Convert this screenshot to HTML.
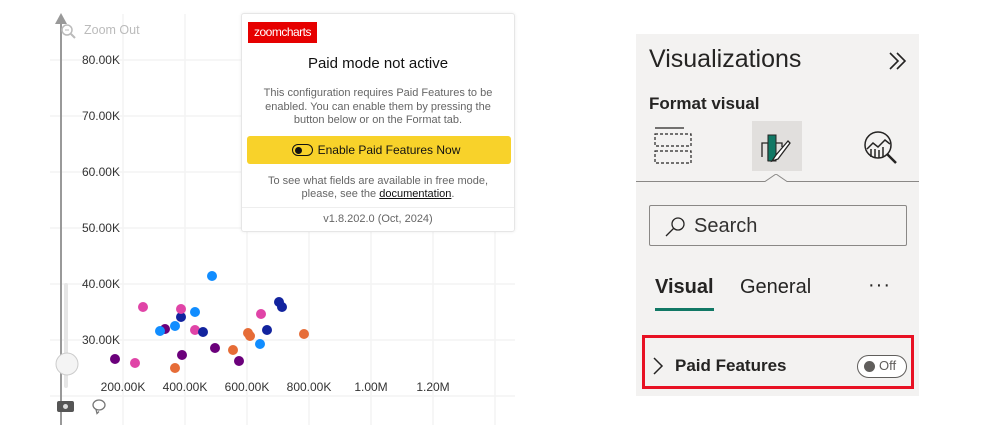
<!DOCTYPE html>
<html><head><meta charset="utf-8"><style>
*{margin:0;padding:0;box-sizing:border-box}
body{width:992px;height:435px;background:#fff;position:relative;overflow:hidden;font-family:"Segoe UI","Liberation Sans",sans-serif}
.a{position:absolute}
.yl{position:absolute;right:872px;font-size:12px;color:#333;text-align:right}
.xl{position:absolute;top:380px;width:70px;margin-left:-35px;text-align:center;font-size:12px;color:#333}
.pop{left:241px;top:13px;width:274px;height:219px;background:#fff;border:1px solid #e6e6e6;border-radius:3px;box-shadow:0 0 3px rgba(0,0,0,.08)}
.panel{left:636px;top:34px;width:283px;height:362px;background:#f3f2f1}
</style></head><body>
<svg class="a" style="left:0;top:0" width="520" height="435">
<g stroke="#f4f4f4" stroke-width="1.5">
<line x1="123" y1="14" x2="123" y2="425"/><line x1="185" y1="14" x2="185" y2="425"/><line x1="247" y1="14" x2="247" y2="425"/><line x1="309" y1="14" x2="309" y2="425"/><line x1="371" y1="14" x2="371" y2="425"/><line x1="433" y1="14" x2="433" y2="425"/><line x1="495" y1="14" x2="495" y2="425"/>
<line x1="50" y1="60" x2="515" y2="60"/><line x1="50" y1="116" x2="515" y2="116"/><line x1="50" y1="172" x2="515" y2="172"/><line x1="50" y1="228" x2="515" y2="228"/><line x1="50" y1="284" x2="515" y2="284"/><line x1="50" y1="340" x2="515" y2="340"/><line x1="50" y1="396" x2="515" y2="396"/>
</g>
<line x1="61" y1="20" x2="61" y2="425" stroke="#999" stroke-width="2"/>
<path d="M55 24 L61 13 L67 24 Z" fill="#999"/>
<line x1="66" y1="285" x2="66" y2="386" stroke="#e6e6e6" stroke-width="4" stroke-linecap="round"/>
<circle cx="67" cy="364" r="11" fill="#f4f4f4" stroke="#ccc"/>
<circle cx="67" cy="30" r="5" fill="none" stroke="#bbb" stroke-width="1.5"/><line x1="65" y1="30" x2="69" y2="30" stroke="#bbb"/><line x1="71" y1="34" x2="75" y2="38" stroke="#bbb" stroke-width="2"/>
<rect x="57" y="401" width="17" height="11" rx="2" fill="#555"/><circle cx="65.5" cy="406.5" r="2.5" fill="#ddd"/>
<ellipse cx="99" cy="405" rx="6" ry="5" fill="none" stroke="#777" stroke-width="1.3"/><path d="M96 409.5 l1 4 l2 -2" fill="none" stroke="#777" stroke-width="1.3"/>
<g>
<circle cx="115" cy="359" r="5" fill="#6b007b"/><circle cx="135" cy="363" r="5" fill="#e044a7"/><circle cx="143" cy="307" r="5" fill="#e044a7"/><circle cx="165" cy="329" r="5" fill="#6b007b"/><circle cx="160" cy="331" r="5" fill="#118dff"/><circle cx="175" cy="326" r="5" fill="#118dff"/><circle cx="181" cy="317" r="5" fill="#12239e"/><circle cx="181" cy="309" r="5" fill="#e044a7"/><circle cx="182" cy="355" r="5" fill="#6b007b"/><circle cx="175" cy="368" r="5" fill="#e66c37"/><circle cx="195" cy="312" r="5" fill="#118dff"/><circle cx="195" cy="330" r="5" fill="#e044a7"/><circle cx="203" cy="332" r="5" fill="#12239e"/><circle cx="212" cy="276" r="5" fill="#118dff"/><circle cx="215" cy="348" r="5" fill="#6b007b"/><circle cx="233" cy="350" r="5" fill="#e66c37"/><circle cx="239" cy="361" r="5" fill="#6b007b"/><circle cx="248" cy="333" r="5" fill="#e66c37"/><circle cx="250" cy="336" r="5" fill="#e66c37"/><circle cx="260" cy="344" r="5" fill="#118dff"/><circle cx="261" cy="314" r="5" fill="#e044a7"/><circle cx="267" cy="330" r="5" fill="#12239e"/><circle cx="279" cy="302" r="5" fill="#12239e"/><circle cx="282" cy="307" r="5" fill="#12239e"/><circle cx="304" cy="334" r="5" fill="#e66c37"/>
</g>
</svg>
<div class="a" style="left:84px;top:23px;font-size:12.5px;color:#bbb">Zoom Out</div>
<div class="yl" style="top:53px">80.00K</div><div class="yl" style="top:109px">70.00K</div><div class="yl" style="top:165px">60.00K</div><div class="yl" style="top:221px">50.00K</div><div class="yl" style="top:277px">40.00K</div><div class="yl" style="top:333px">30.00K</div>
<div class="xl" style="left:123px">200.00K</div><div class="xl" style="left:185px">400.00K</div><div class="xl" style="left:247px">600.00K</div><div class="xl" style="left:309px">800.00K</div><div class="xl" style="left:371px">1.00M</div><div class="xl" style="left:433px">1.20M</div>

<div class="a pop">
<div class="a" style="left:6px;top:8px;width:69px;height:21px;background:#e60000;color:#fff;font-size:12px;line-height:21px;text-align:center;letter-spacing:-0.5px">zoomcharts</div>
<div class="a" style="left:0;width:100%;top:41px;text-align:center;font-size:15px;color:#111">Paid mode not active</div>
<div class="a" style="left:8px;right:8px;top:73px;text-align:center;font-size:11px;line-height:13.5px;color:#666">This configuration requires Paid Features to be enabled. You can enable them by pressing the button below or on the Format tab.</div>
<div class="a" style="left:5px;top:122px;width:264px;height:28px;background:#f8d22a;border-radius:3px;font-size:12px;color:#111;line-height:28px;text-align:center;padding-left:20px">
<span style="position:absolute;left:45px;top:8px;width:21px;height:12px;border:1.3px solid #111;border-radius:6px"><span style="position:absolute;left:1.5px;top:1.5px;width:7px;height:7px;border-radius:50%;background:#111"></span></span>Enable Paid Features Now</div>
<div class="a" style="left:0;width:100%;top:161px;text-align:center;font-size:11px;line-height:13px;color:#666">To see what fields are available in free mode,<br>please, see the <span style="color:#111;text-decoration:underline">documentation</span>.</div>
<div class="a" style="left:0;width:100%;top:193px;border-top:1px solid #eee;text-align:center;font-size:11px;color:#666;padding-top:5px">v1.8.202.0 (Oct, 2024)</div>
</div>

<div class="a panel">
<div class="a" style="left:13px;top:11px;font-size:25px;color:#252423">Visualizations</div>
<svg class="a" style="left:252px;top:17px" width="20" height="20"><path d="M2 2 L10 10 L2 18 M9 2 L17 10 L9 18" fill="none" stroke="#252423" stroke-width="1.6"/></svg>
<div class="a" style="left:13px;top:60px;font-size:17px;font-weight:600;color:#252423">Format visual</div>
<svg class="a" style="left:18px;top:92px" width="40" height="45" fill="none" stroke="#252423" stroke-width="1.2"><line x1="1" y1="2" x2="30" y2="2"/><rect x="1" y="8" width="36" height="12" stroke-dasharray="3 2"/><rect x="1" y="25" width="36" height="12" stroke-dasharray="3 2"/></svg>
<div class="a" style="left:116px;top:87px;width:50px;height:50px;background:#e1dfdd"></div>
<svg class="a" style="left:122px;top:93px" width="40" height="40"><path d="M4 30 V16 H10 V34" fill="none" stroke="#252423" stroke-width="1.3"/><rect x="10" y="8" width="8" height="26" fill="#117865" stroke="#252423" stroke-width="1"/><path d="M18 16 H24 V20" fill="none" stroke="#252423" stroke-width="1.3"/><path d="M30 14 L18 28 L14 34 L20 32 L32 16 Z" fill="#fff" stroke="#252423" stroke-width="1.3"/></svg>
<svg class="a" style="left:226px;top:95px" width="40" height="40" fill="none" stroke="#252423" stroke-width="1.5"><circle cx="16" cy="16" r="13"/><path d="M5 20 L11 14 L16 18 L23 11 L28 15"/><path d="M9 20 V28 M13 20 V29 M17 21 V29 M21 18 V28"/><line x1="25" y1="25" x2="34" y2="34" stroke-width="2.5"/></svg>
<svg class="a" style="left:0;top:140px" width="283" height="20"><path d="M0 7.5 H129 L140 0 L151 7.5 H283" fill="none" stroke="#8a8886" stroke-width="1"/></svg>
<div class="a" style="left:13px;top:171px;width:258px;height:41px;border:1px solid #8a8886;border-radius:2px;background:#f3f2f1"></div>
<svg class="a" style="left:28px;top:181px" width="24" height="24" fill="none" stroke="#252423" stroke-width="1.3"><circle cx="14" cy="9" r="6"/><line x1="9.5" y1="13.5" x2="2" y2="21"/></svg>
<div class="a" style="left:58px;top:181px;font-size:20px;color:#323130">Search</div>
<div class="a" style="left:19px;top:242px;font-size:20px;font-weight:600;color:#252423">Visual</div>
<div class="a" style="left:19px;top:274px;width:59px;height:3px;background:#117865"></div>
<div class="a" style="left:104px;top:242px;font-size:20px;color:#252423">General</div>
<div class="a" style="left:232px;top:240px;font-size:20px;color:#252423;letter-spacing:1px">···</div>
<div class="a" style="left:6px;top:301px;width:272px;height:54px;border:3px solid #e81123"></div>
<svg class="a" style="left:16px;top:322px" width="12" height="20"><path d="M2 2 L10 10 L2 18" fill="none" stroke="#252423" stroke-width="1.5"/></svg>
<div class="a" style="left:39px;top:322px;font-size:17px;font-weight:600;color:#252423">Paid Features</div>
<div class="a" style="left:221px;top:321px;width:50px;height:23px;border:1px solid #605e5c;border-radius:12px;background:#fff"><span style="position:absolute;left:6px;top:5px;width:11px;height:11px;border-radius:50%;background:#605e5c"></span><span style="position:absolute;left:21px;top:2px;font-size:13px;color:#605e5c">Off</span></div>
</div>
</body></html>
